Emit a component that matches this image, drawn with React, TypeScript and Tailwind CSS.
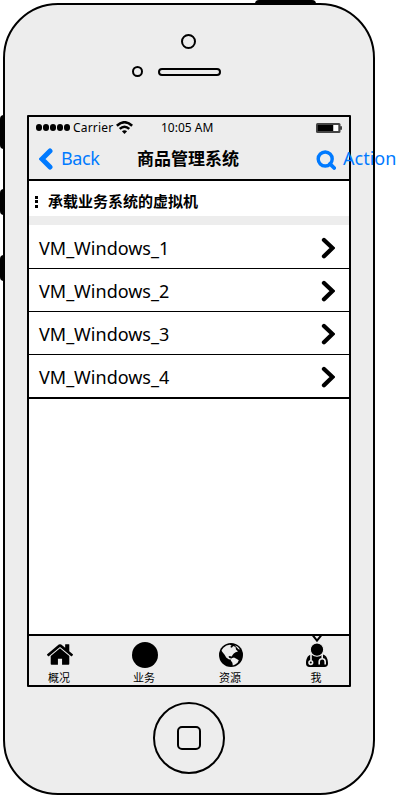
import React from 'react';

const rows = ['VM_Windows_1', 'VM_Windows_2', 'VM_Windows_3', 'VM_Windows_4'];

function Wifi() {
  return (
    <svg className="ml-[3px] h-[13px] w-[17px] shrink-0" viewBox="0 0 16 12" fill="none" stroke="#000" strokeWidth="2.4">
      <path d="M.8 4.3Q8-2.2 15.2 4.3M3.5 7.3Q8 3.3 12.5 7.3" />
      <path d="M8 12 5.6 9.6Q8 7.8 10.4 9.6Z" fill="#000" stroke="none" />
    </svg>
  );
}

function Battery() {
  return (
    <svg className="h-[10px] w-[26px] shrink-0" viewBox="0 0 26 10">
      <rect width="24.5" height="10" rx="1.5" fill="#444" />
      <rect x="24" y="3" width="2" height="4" rx="1" fill="#444" />
      <rect x="1.8" y="2" width="15.5" height="6" fill="#000" />
      <rect x="17.3" y="2" width="5" height="6" fill="#fff" />
    </svg>
  );
}

function Home() {
  return (
    <svg className="h-[21px] w-[26px]" viewBox="90 256 1612 1280">
      <path d="M1472 992v480q0 26-19 45t-45 19h-384v-384h-256v384h-384q-26 0-45-19t-19-45v-480q0-1 .5-3t.5-3l575-474 575 474q1 2 1 6zm223-69l-62 74q-8 9-21 11h-3q-13 0-21-7l-692-577-692 577q-12 8-24 7-13-2-21-11l-62-74q-8-10-7-23.5t11-21.5l719-599q32-26 76-26t76 26l244 204v-195q0-14 9-23t23-9h192q14 0 23 9t9 23v408l219 182q10 8 11 21.5t-7 23.5z" />
    </svg>
  );
}

function Globe() {
  return (
    <svg className="h-[24px] w-[24px]" viewBox="0 0 24 24">
      <circle cx="12" cy="12" r="12" />
      <path
        fill="#ededed"
        d="M4.4 4.8 7.5 2.6 10.8 1.8 12.6 2.6 11.2 4 12.8 4.8 14.2 3 16.5 4 17 6.4 19 8.4 16.6 9.2 14.8 10.4 13.4 12.2 12.8 13.6 10.6 13 9.4 13.8 10.4 15 11.8 15.2 12 16.8 9.6 16.2 7.2 14.4 5.6 11.8 4.2 10 3 8.6 2.6 7.2Z"
      />
      <path fill="#ededed" d="M12.4 15.2 15 14.6 17.4 15.8 19.8 17.2 18.6 19.8 16.2 21.4 13.8 22.4 13.4 19.8 11.8 17.6Z" />
      <path fill="#ededed" d="M15.6 2.2 18.8 3.8 21 6.4 19.4 6.2 17.8 4.6Z" />
    </svg>
  );
}

function Doctor() {
  return (
    <svg className="h-[31px] w-[22px]" viewBox="0 0 22 31">
      <path d="m6.8 -.6 4.2 5.2L15.2-.6" fill="none" stroke="#000" strokeWidth="2" />
      <path d="M5 18.4Q11 22 17 18.4C20.5 19.2 22 23.2 22 27.2Q22 31 18.5 31H3.5Q0 31 0 27.2C0 23.2 1.5 19.2 5 18.4Z" />
      <circle cx="11" cy="13.6" r="6.7" stroke="#ededed" strokeWidth="1.1" />
      <g fill="none" stroke="#ededed" strokeWidth="1.6">
        <path d="M5 18v6.6M16.2 18v4.4M13.2 28.6v-2.8a3 3 0 0 1 6 0v2.8" />
        <circle cx="4.8" cy="26.6" r="1.8" />
      </g>
    </svg>
  );
}

const tabs = [
  { label: '概况', icon: <Home />, box: 'ml-[18px] w-[26px]', gap: 'mb-[4px]' },
  { label: '业务', icon: <span className="block size-[26px] rounded-full bg-black" />, box: 'ml-[59px] w-[26px]', gap: 'mb-[1px]' },
  { label: '资源', icon: <Globe />, box: 'ml-[61px] w-[24px]', gap: 'mb-[2px]' },
  { label: '我', icon: <Doctor />, box: 'ml-[63px] w-[22px]', gap: 'mb-[2px]' },
];

export default function App() {
  return (
    <div className="relative h-[795px] w-[400px] overflow-hidden bg-white pl-[3px] pt-[3px] font-['Noto_Sans','Noto_Sans_CJK_SC',sans-serif] text-black">
      <span className="absolute left-[255px] top-0 h-[8px] w-[61px] rounded-t-[4px] bg-black" />
      <span className="absolute left-0 top-[115px] h-[34px] w-[6px] rounded-l-[4px] bg-black" />
      <span className="absolute left-0 top-[189px] h-[26px] w-[6px] rounded-l-[4px] bg-black" />
      <span className="absolute left-0 top-[255px] h-[26px] w-[6px] rounded-l-[4px] bg-black" />

      <div className="relative flex h-[792px] w-[372px] flex-col rounded-[55px] border-2 border-black bg-[#ededed] pl-[22px]">
        <header className="h-[110px] shrink-0">
          <div className="ml-[154px] mt-[29px] size-[15px] rounded-full border-2 border-black" />
          <div className="ml-[105px] mt-[17px] flex items-center gap-[15px]">
            <span className="size-[11px] rounded-full border-2 border-black" />
            <span className="h-[8px] w-[63px] rounded-full border-2 border-black" />
          </div>
        </header>

        <main className="flex h-[572px] w-[324px] shrink-0 flex-col rounded-[1px] border-2 border-black bg-white">
          <div className="h-[64px] shrink-0 border-b-2 border-black bg-[#ededed]">
            <div className="flex h-[21px] items-center px-[7px] text-[12px] leading-[21px]">
              <span className="flex w-[35px] shrink-0 gap-[0.6px]">
                {[0, 1, 2, 3, 4].map((i) => (
                  <span key={i} className="size-[6.4px] shrink-0 rounded-full bg-black" />
                ))}
              </span>
              <span className="ml-[2px] w-[40px] whitespace-nowrap tracking-[0.2px]">Carrier</span>
              <Wifi />
              <span className="ml-[28px] mr-auto whitespace-nowrap">10:05 AM</span>
              <Battery />
            </div>
            <div className="flex h-[41px] items-center whitespace-nowrap pl-[10px] text-[18px] leading-[41px] text-[#007aff]">
              <svg className="h-[22px] w-[14px] shrink-0" viewBox="0 0 14 22" fill="none" stroke="currentColor" strokeWidth="5" strokeLinecap="round">
                <path d="m11 3-8 8 8 8" />
              </svg>
              <span className="ml-[8px] w-[40px] shrink-0 tracking-[-0.4px]">Back</span>
              <h1 className="ml-[36px] w-[104px] shrink-0 text-[17px] font-bold text-black">商品管理系统</h1>
              <svg className="ml-[75px] mt-[2px] h-[20px] w-[20px] shrink-0" viewBox="0 0 20 20" fill="none" stroke="currentColor" strokeWidth="3.4">
                <circle cx="9.2" cy="9" r="7" />
                <path d="m14 13.8 4.2 4.2" strokeWidth="3.8" strokeLinecap="round" />
              </svg>
              <span className="ml-[7px] shrink-0">Action</span>
            </div>
          </div>

          <div className="flex h-[44px] shrink-0 items-center border-b-[9px] border-[#ededed] pl-[6px]">
            <span className="mt-[6px] flex w-[3px] flex-col gap-[1.5px]">
              <i className="h-[3px] bg-black" />
              <i className="h-[3px] bg-black" />
              <i className="h-[3px] bg-black" />
            </span>
            <h2 className="ml-[10px] mt-[5px] text-[15px] font-bold leading-[22px]">承载业务系统的虚拟机</h2>
          </div>

          <ul className="shrink-0 border-b-2 border-black">
            {rows.map((name, i) => (
              <li
                key={name}
                className={`flex items-center justify-between pl-[10px] pr-[14px] text-[18px] ${i < 3 ? 'border-b border-black' : ''} ${i === 0 ? 'h-[44px]' : i === 3 ? 'h-[42px]' : 'h-[43px]'}`}
              >
                <span className={i === 0 ? 'mt-[4px]' : 'mt-[2px]'}>{name}</span>
                <svg className={`h-[22px] w-[15px] ${i === 0 ? 'mt-[2px]' : 'mt-px'}`} viewBox="0 0 15 22" fill="none" stroke="#000" strokeWidth="4.3" strokeLinecap="round">
                  <path d="m4 3 8.5 8L4 19.2" />
                </svg>
              </li>
            ))}
          </ul>

          <nav className="mt-auto flex h-[51px] shrink-0 border-t-2 border-black bg-[#ededed] text-[11px] leading-[16px]">
            {tabs.map((t) => (
              <div key={t.label} className={`flex h-[49px] flex-col items-center justify-end ${t.box}`}>
                <span className={t.gap}>{t.icon}</span>
                <span className="relative -left-[1px] top-[1px] whitespace-nowrap">{t.label}</span>
              </div>
            ))}
          </nav>
        </main>

        <div className="ml-[126px] mt-[15px] flex size-[72px] shrink-0 items-center justify-center rounded-full border-2 border-black">
          <span className="size-[24px] rounded-[5px] border-2 border-black" />
        </div>
      </div>
    </div>
  );
}
